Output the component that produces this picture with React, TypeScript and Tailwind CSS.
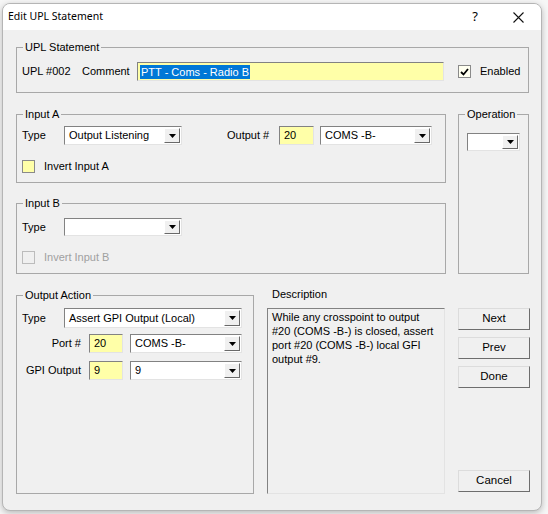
import React from "react";

const font = { fontFamily: '"Liberation Sans", Arial, sans-serif' };

function Arrow() {
  return (
    <div className="flex h-full w-[16px] shrink-0 items-center justify-center border border-l-white border-t-white border-r-[#696969] border-b-[#696969] bg-[#f0f0f0]">
      <svg width="7" height="4" viewBox="0 0 7 4">
        <path d="M0 0h7L3.5 4z" fill="#000" />
      </svg>
    </div>
  );
}

function Select({ w, value, h = "h-[19px]" }: { w: string; value?: string; h?: string }) {
  return (
    <div className={`${w} ${h} flex shrink-0 items-stretch border border-t-[#828282] border-l-[#828282] border-r-[#e3e3e3] border-b-[#e3e3e3] bg-white p-px`}>
      <div className="flex flex-1 items-center overflow-hidden whitespace-nowrap pl-[3px] leading-none">{value}</div>
      <Arrow />
    </div>
  );
}

function YellowInput({ w, value }: { w: string; value: string }) {
  return (
    <div className={`${w} flex h-[19px] shrink-0 items-center border border-t-[#828282] border-l-[#828282] border-r-[#e3e3e3] border-b-[#e3e3e3] bg-[#ffffa8] pl-[4px] leading-none`}>
      {value}
    </div>
  );
}

function Group({ title, className, children }: { title: string; className: string; children?: React.ReactNode }) {
  return (
    <div className={`relative shrink-0 border border-[#a8a8a8] ${className}`}>
      <span className="absolute left-[6px] top-[-8px] bg-[#f0f0f0] px-[2px] leading-[14px]">{title}</span>
      {children}
    </div>
  );
}

function Button({ label, className = "" }: { label: string; className?: string }) {
  return (
    <div className={`flex h-[22px] w-[72px] shrink-0 items-center justify-center border border-t-[#dcdcdc] border-l-[#dcdcdc] border-r-[#6d6d6d] border-b-[#6d6d6d] bg-[#f0f0f0] text-[11.5px] ${className}`}>
      {label}
    </div>
  );
}

export default function App() {
  return (
    <div className="h-[514px] w-[548px] overflow-hidden bg-[#f6f6f6] text-[11px] text-black" style={font}>
      <div className="ml-[2px] mt-[3px] h-[508px] w-[540px] overflow-hidden rounded-[8px] border border-[#b5b5b5] bg-[#f0f0f0] shadow-[0_2px_6px_rgba(0,0,0,0.25)]">
        {/* Title bar */}
        <div className="flex h-[26px] items-center bg-white">
          <span className="ml-[5px] text-[10.5px]" style={{ fontFamily: '"Noto Sans", "Liberation Sans", sans-serif' }}>
            Edit UPL Statement
          </span>
          <span className="ml-auto mr-[35px] text-[13px]" style={{ fontFamily: '"Noto Sans", sans-serif' }}>?</span>
          <svg className="mr-[17px]" width="11" height="11" viewBox="0 0 11 11">
            <path d="M0.5 0.5L10.5 10.5M10.5 0.5L0.5 10.5" stroke="#111" strokeWidth="1.1" />
          </svg>
        </div>

        {/* Body */}
        <div className="pl-[13px] pt-[17px]">
          <Group title="UPL Statement" className="h-[46px] w-[513px]">
            <div className="flex items-center pl-[5px] pt-[14px]">
              <span className="w-[60px]">UPL #002</span>
              <span className="w-[55px]">Comment</span>
              <div className="flex h-[19px] w-[307px] items-center border border-t-[#828282] border-l-[#828282] border-r-[#e3e3e3] border-b-[#e3e3e3] bg-[#ffffa8] pl-[2px]">
                <span className="bg-[#0078d7] px-px leading-[14px] text-white">PTT - Coms - Radio B</span>
              </div>
              <div className="ml-[14px] flex h-[13px] w-[13px] items-center justify-center border border-[#8a8a8a] bg-[#fffff0]">
                <svg width="9" height="8" viewBox="0 0 9 8">
                  <path d="M1 4l2.5 2.5L8 1" stroke="#000" strokeWidth="1.8" fill="none" />
                </svg>
              </div>
              <span className="ml-[9px]">Enabled</span>
            </div>
          </Group>

          <div className="mt-[21px] flex">
            <div className="flex flex-col">
              <Group title="Input A" className="h-[69px] w-[430px]">
                <div className="flex items-center pl-[5px] pt-[11px]">
                  <span className="w-[42px]">Type</span>
                  <Select w="w-[118px]" value="Output Listening" />
                  <span className="ml-[45px] w-[52px]">Output #</span>
                  <YellowInput w="w-[35px]" value="20" />
                  <div className="ml-[6px]">
                    <Select w="w-[112px]" value="COMS -B-" />
                  </div>
                </div>
                <div className="mt-[13px] flex items-center pl-[5px]">
                  <div className="h-[13px] w-[13px] border border-[#8a8a8a] bg-[#ffffa8]" />
                  <span className="ml-[9px]">Invert Input A</span>
                </div>
              </Group>
              <Group title="Input B" className="mt-[20px] h-[71px] w-[430px]">
                <div className="flex items-center pl-[5px] pt-[14px]">
                  <span className="w-[42px]">Type</span>
                  <Select w="w-[118px]" h="h-[18px]" />
                </div>
                <div className="mt-[13px] flex items-center pl-[5px]">
                  <div className="h-[13px] w-[13px] border border-[#bcbcbc] bg-[#f0f0f0]" />
                  <span className="ml-[9px] text-[#a0a0a0]">Invert Input B</span>
                </div>
              </Group>
            </div>
            <Group title="Operation" className="ml-[12px] h-[160px] w-[71px]">
              <div className="pl-[8px] pt-[18px]">
                <Select w="w-[53px]" h="h-[18px]" />
              </div>
            </Group>
          </div>

          <div className="mt-[21px] flex">
            <Group title="Output Action" className="h-[199px] w-[238px]">
              <div className="flex items-center pl-[5px] pt-[12px]">
                <span className="w-[42px]">Type</span>
                <Select w="w-[178px]" h="h-[20px]" value="Assert GPI Output (Local)" />
              </div>
              <div className="mt-[6px] flex items-center">
                <span className="w-[72px] pr-[8px] text-right">Port #</span>
                <YellowInput w="w-[34px]" value="20" />
                <div className="ml-[7px]">
                  <Select w="w-[112px]" value="COMS -B-" />
                </div>
              </div>
              <div className="mt-[8px] flex items-center">
                <span className="w-[72px] pr-[8px] text-right">GPI Output</span>
                <YellowInput w="w-[34px]" value="9" />
                <div className="ml-[7px]">
                  <Select w="w-[112px]" value="9" />
                </div>
              </div>
            </Group>

            <div className="ml-[13px] mt-[-8px] flex w-[178px] flex-col">
              <span className="pl-[5px] leading-[14px]">Description</span>
              <div className="mt-[7px] h-[186px] border border-t-[#828282] border-l-[#828282] border-r-[#e3e3e3] border-b-[#e3e3e3] bg-[#f0f0f0] px-[4px] pt-[1px] leading-[14px]">
                While any crosspoint to output #20 (COMS -B-) is closed, assert port #20 (COMS -B-) local GFI output #9.
              </div>
            </div>

            <div className="ml-[13px] mt-[13px] flex h-[184px] flex-col">
              <Button label="Next" className="border-r-[#3c3c3c] border-b-[#3c3c3c]" />
              <Button label="Prev" className="mt-[7px]" />
              <Button label="Done" className="mt-[7px]" />
              <Button label="Cancel" className="mt-auto" />
            </div>
          </div>
        </div>
      </div>
    </div>
  );
}
